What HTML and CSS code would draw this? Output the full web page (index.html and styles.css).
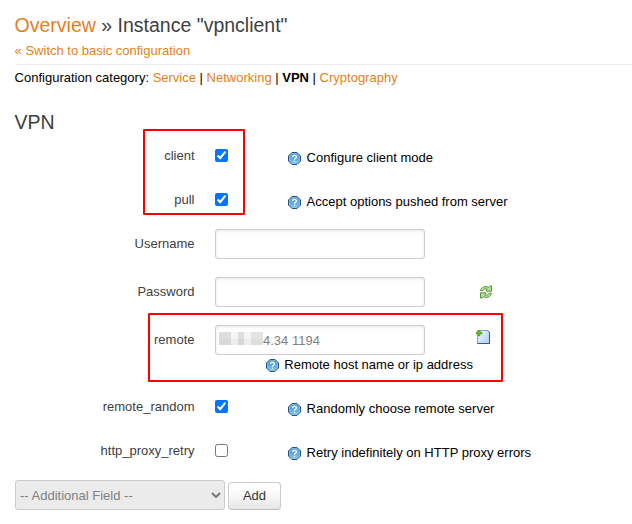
FILE: index.html
```html
<!DOCTYPE html>
<html lang="en">
<head>
<meta charset="utf-8">
<title>Instance "vpnclient"</title>
<link rel="stylesheet" href="styles.css">
</head>
<body>
<svg class="defs" width="0" height="0">
  <defs>
    <linearGradient id="blue" x1="0" y1="0" x2="0" y2="1"><stop offset="0" stop-color="#5b9fd6"/><stop offset=".5" stop-color="#62aae4"/><stop offset="1" stop-color="#83c8f8"/></linearGradient>
    <linearGradient id="page" x1="0" y1="0" x2="1" y2="1"><stop offset="0" stop-color="#f0f8ff"/><stop offset="1" stop-color="#a9cff2"/></linearGradient>
    <symbol id="help" viewBox="0 0 13 13">
      <path d="M4 .5h5L12.500 4v5L9 12.500H4L.5 9V4z" fill="url(#blue)" stroke="#28527c"/>
      <path d="M4.300 1.500h4.400l2.800 2.800v4.400L8.700 11.500H4.300L1.500 8.700V4.300z" fill="none" stroke="#9bc9ed" opacity=".5"/>
      <path d="M4.600 5C4.600 2.900 8.500 2.900 8.500 4.900C8.500 6.300 6.500 6.200 6.500 7.700M6.500 8.700v1.300" fill="none" stroke="#fff" stroke-width="1.300"/>
    </symbol>
  </defs>
</svg>
<main>
  <h2 class="title"><a>Overview</a> » Instance "vpnclient"</h2>
  <div class="switch"><a>« Switch to basic configuration</a></div>
  <div class="categories">Configuration category: <a>Service</a> | <a>Networking</a> | <strong>VPN</strong> | <a>Cryptography</a></div>
  <h3 class="section">VPN</h3>
  <form class="form">
    <div class="row"><label>client</label><input type="checkbox" checked><div class="hint"><svg><use href="#help"/></svg>Configure client mode</div></div>
    <div class="row"><label>pull</label><input type="checkbox" checked><div class="hint"><svg><use href="#help"/></svg>Accept options pushed from server</div></div>
    <div class="row text"><label>Username</label><input type="text" class="field"></div>
    <div class="row text"><label>Password</label><input type="text" class="field">
      <svg class="reload" viewBox="0 0 12 14"><path d="M.5 5.500C1 2.500 5.500.2 8.500 2.500L10 .9H11.500V6.200H6.500L6.200 5L7.200 4.200C5.500 3.300 3.500 4.200 2.500 6z" fill="#b5e292" stroke="#4b8a2d" stroke-width=".9"/><path d="M11.500 8.500C11 11.500 6.500 13.800 3.500 11.500L2 13.100H.5V7.800H5.500L5.800 9L4.800 9.800C6.500 10.700 8.500 9.800 9.500 8z" fill="#b5e292" stroke="#4b8a2d" stroke-width=".9"/></svg>
    </div>
    <div class="row remote"><label>remote</label>
      <div class="value">
        <div class="field masked"><span class="mask"><i></i><i></i><i></i><i></i><i></i><i></i><i></i><i></i><i></i><i></i><i></i><i></i><i></i><i></i></span>4.34 1194</div>
        <div class="hint"><svg><use href="#help"/></svg>Remote host name or ip address</div>
      </div>
      <svg class="add-page" viewBox="0 0 14 14"><path d="M1.500 1.500V13.500H13.500V2.500L11.500.5H2.500z" fill="url(#page)" stroke="#7fa5d2"/><path d="M1.500 13.500H13.500V2.500L11.500.5" fill="none" stroke="#34598c"/><path d="M2 0h2v2h2v2H4v2H2V4H0V2h2z" fill="#69b52d" stroke="#3f8a20" stroke-width=".4"/></svg>
    </div>
    <div class="row"><label>remote_random</label><input type="checkbox" checked><div class="hint"><svg><use href="#help"/></svg>Randomly choose remote server</div></div>
    <div class="row"><label>http_proxy_retry</label><input type="checkbox"><div class="hint"><svg><use href="#help"/></svg>Retry indefinitely on HTTP proxy errors</div></div>
    <div class="mark mark-client"></div>
    <div class="mark mark-remote"></div>
  </form>
  <div class="actions"><div class="select">-- Additional Field --<svg viewBox="0 0 10 6"><path d="M1 1l4 4 4-4" fill="none" stroke="#777" stroke-width="2"/></svg></div><button type="button">Add</button></div>
</main>
</body>
</html>
```

FILE: styles.css
```css
* { box-sizing: border-box; }
body { margin: 0; background: #fff; color: #000; font: 13px/18px "Liberation Sans", Arial, sans-serif; overflow: hidden; }
.defs { position: absolute; }
main { padding: 7px 0 0 15px; }
a { color: #e37f1c; }
h2, h3 { margin: 0; color: #404040; font-size: 19.5px; font-weight: normal; line-height: 36px; }
.title, .switch, .categories, .section { text-indent: -.4px; }
.switch { height: 22px; border-bottom: 1px solid #eee; line-height: 16px; }
.categories { padding-top: 4px; }
.section { margin-top: 17px; }
.form { position: relative; margin: -15px 0 0; padding-top: 22px; }
.row { display: grid; grid-template-columns: 180px 73px 1fr; column-gap: 20px; align-items: start; height: 44px; }
.row label { padding-right: .5px; text-align: right; color: #404040; }
.row.text, .row.remote { grid-template-columns: 180px 210px 1fr; height: 48px; }
.row.remote { height: 67px; }
input[type="checkbox"] { width: 13px; height: 13px; margin: 2px 0 0; }
.field { display: block; width: 210px; height: 30px; margin: -6px 0 0; padding: 4px; border: 1px solid #ccc; border-radius: 3px; background: #fff; box-shadow: inset 0 1px 3px rgba(0, 0, 0, .1); color: #808080; font: inherit; }
.hint { display: flex; align-items: center; gap: 5.6px; margin: 2px 0 0 -20px; white-space: nowrap; }
.hint svg { flex: none; width: 13px; height: 13px; margin-top: 1px; }
.value .hint { gap: 5.3px; margin: 1px 0 0 51px; }
.masked { display: flex; padding: 6px 3px; }
.mask { display: grid; grid-template: 7px 6px / 12px 7px 6px 6px 1px 6px 6px; width: 44px; height: 13px; }
.mask i { background: #dedede; }
.mask i:nth-child(2), .mask i:nth-child(4), .mask i:nth-child(5) { background: #f5f5f5; }
.mask i:nth-child(6), .mask i:nth-child(7) { background: #e4e4e4; }
.mask i:nth-child(8) { background: #d9d9d9; }
.mask i:nth-child(9), .mask i:nth-child(11), .mask i:nth-child(12) { background: #edefef; }
.mask i:nth-child(10) { background: #d7d7d7; }
.reload { width: 12px; height: 14px; margin: 2px 0 0 35px; }
.add-page { width: 14px; height: 14px; margin: -1px 0 0 31px; }
.mark { position: absolute; border: 2px solid #f00; border-radius: 1px; }
.mark-client { left: 128px; top: 4px; width: 102px; height: 86px; }
.mark-remote { left: 133px; top: 188px; width: 355px; height: 69px; }
.actions { display: flex; align-items: flex-end; gap: 3px; margin-top: -6px; }
.select { display: flex; align-items: center; justify-content: space-between; width: 210px; height: 30px; padding: 2px 3px 0 4px; border: 1px solid #ccc; border-radius: 3px; background: #ebebeb; color: #808080; }
.select svg { width: 10px; height: 6px; margin-top: -2px; }
button { width: 53px; height: 28px; padding: 0; border: 1px solid #ccc; border-bottom-color: #bbb; border-radius: 4px; background: linear-gradient(#fff, #fff 25%, #e6e6e6); box-shadow: inset 0 1px 0 rgba(255, 255, 255, .2), 0 1px 2px rgba(0, 0, 0, .05); color: #333; font: inherit; }
```
